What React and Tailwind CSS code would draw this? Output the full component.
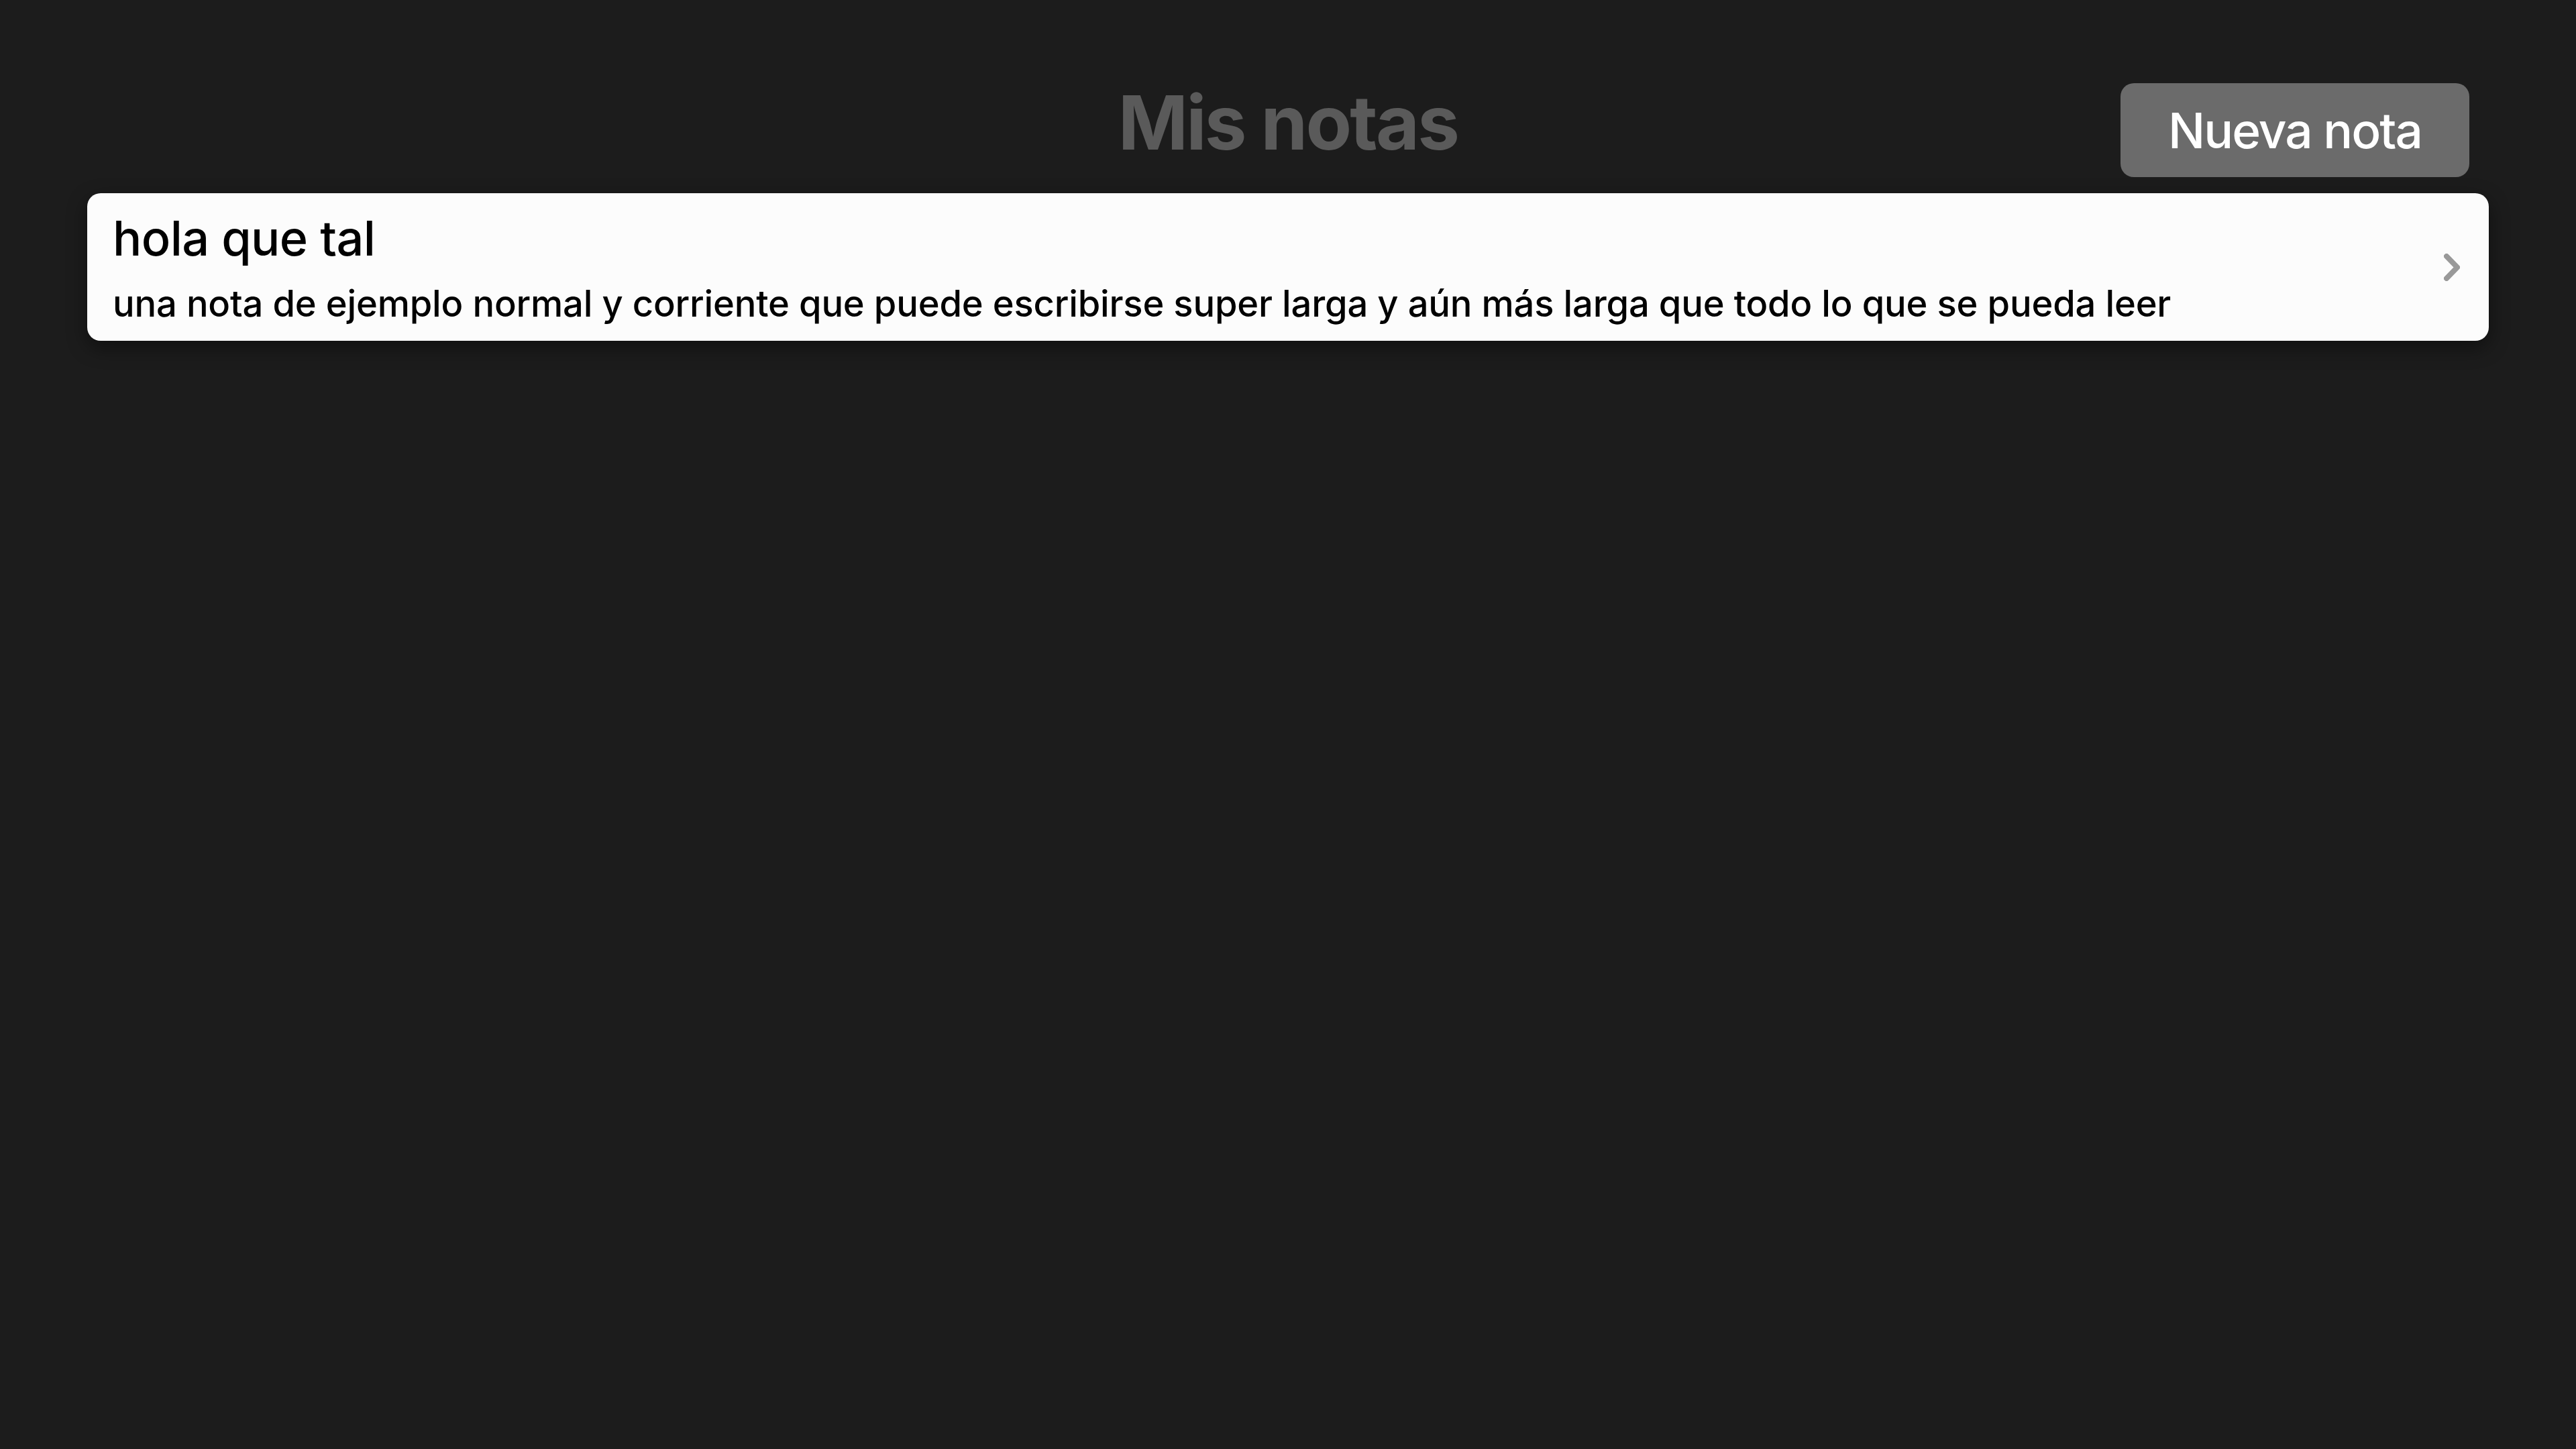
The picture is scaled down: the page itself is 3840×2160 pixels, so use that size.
export default function App() {
  return (
    <div className="min-h-screen w-full bg-[#1c1c1c] px-[130px]" style={{ fontFamily: 'Inter, "Noto Sans", sans-serif' }}>
      <div className="grid grid-cols-[1fr_auto_1fr] items-start pt-[124px]">
        <div />
        <h1 className="mt-[2px] text-[112px] leading-none font-bold text-[#5a5a5a] tracking-[-0.025em]">Mis notas</h1>
        <div className="flex justify-end pr-[29px]">
          <button className="flex h-[140px] w-[520px] items-center justify-center rounded-[20px] bg-[#6b6b6b] text-[73px] leading-none font-[450] text-white tracking-[-0.027em]">
            Nueva nota
          </button>
        </div>
      </div>
      <div className="mt-[24px] flex h-[220px] items-center justify-between rounded-[20px] bg-[#fcfcfc] pl-[38px] pr-[43px] shadow-[0_10px_30px_rgba(0,0,0,0.45)]">
        <div className="flex flex-col">
          <div className="mt-[2px] text-[72px] leading-none font-[450] text-black tracking-[-0.008em]">hola que tal</div>
          <div className="mt-[34px] text-[54.3px] leading-none font-[450] text-black tracking-[-0.0035em]">
            una nota de ejemplo normal y corriente que puede escribirse super larga y aún más larga que todo lo que se pueda leer
          </div>
        </div>
        <svg width="24" height="41" viewBox="0 0 24 41" fill="none">
          <path d="M4 4 L20 20.5 L4 37" stroke="#999999" strokeWidth="8" strokeLinecap="round" strokeLinejoin="round" />
        </svg>
      </div>
    </div>
  );
}
